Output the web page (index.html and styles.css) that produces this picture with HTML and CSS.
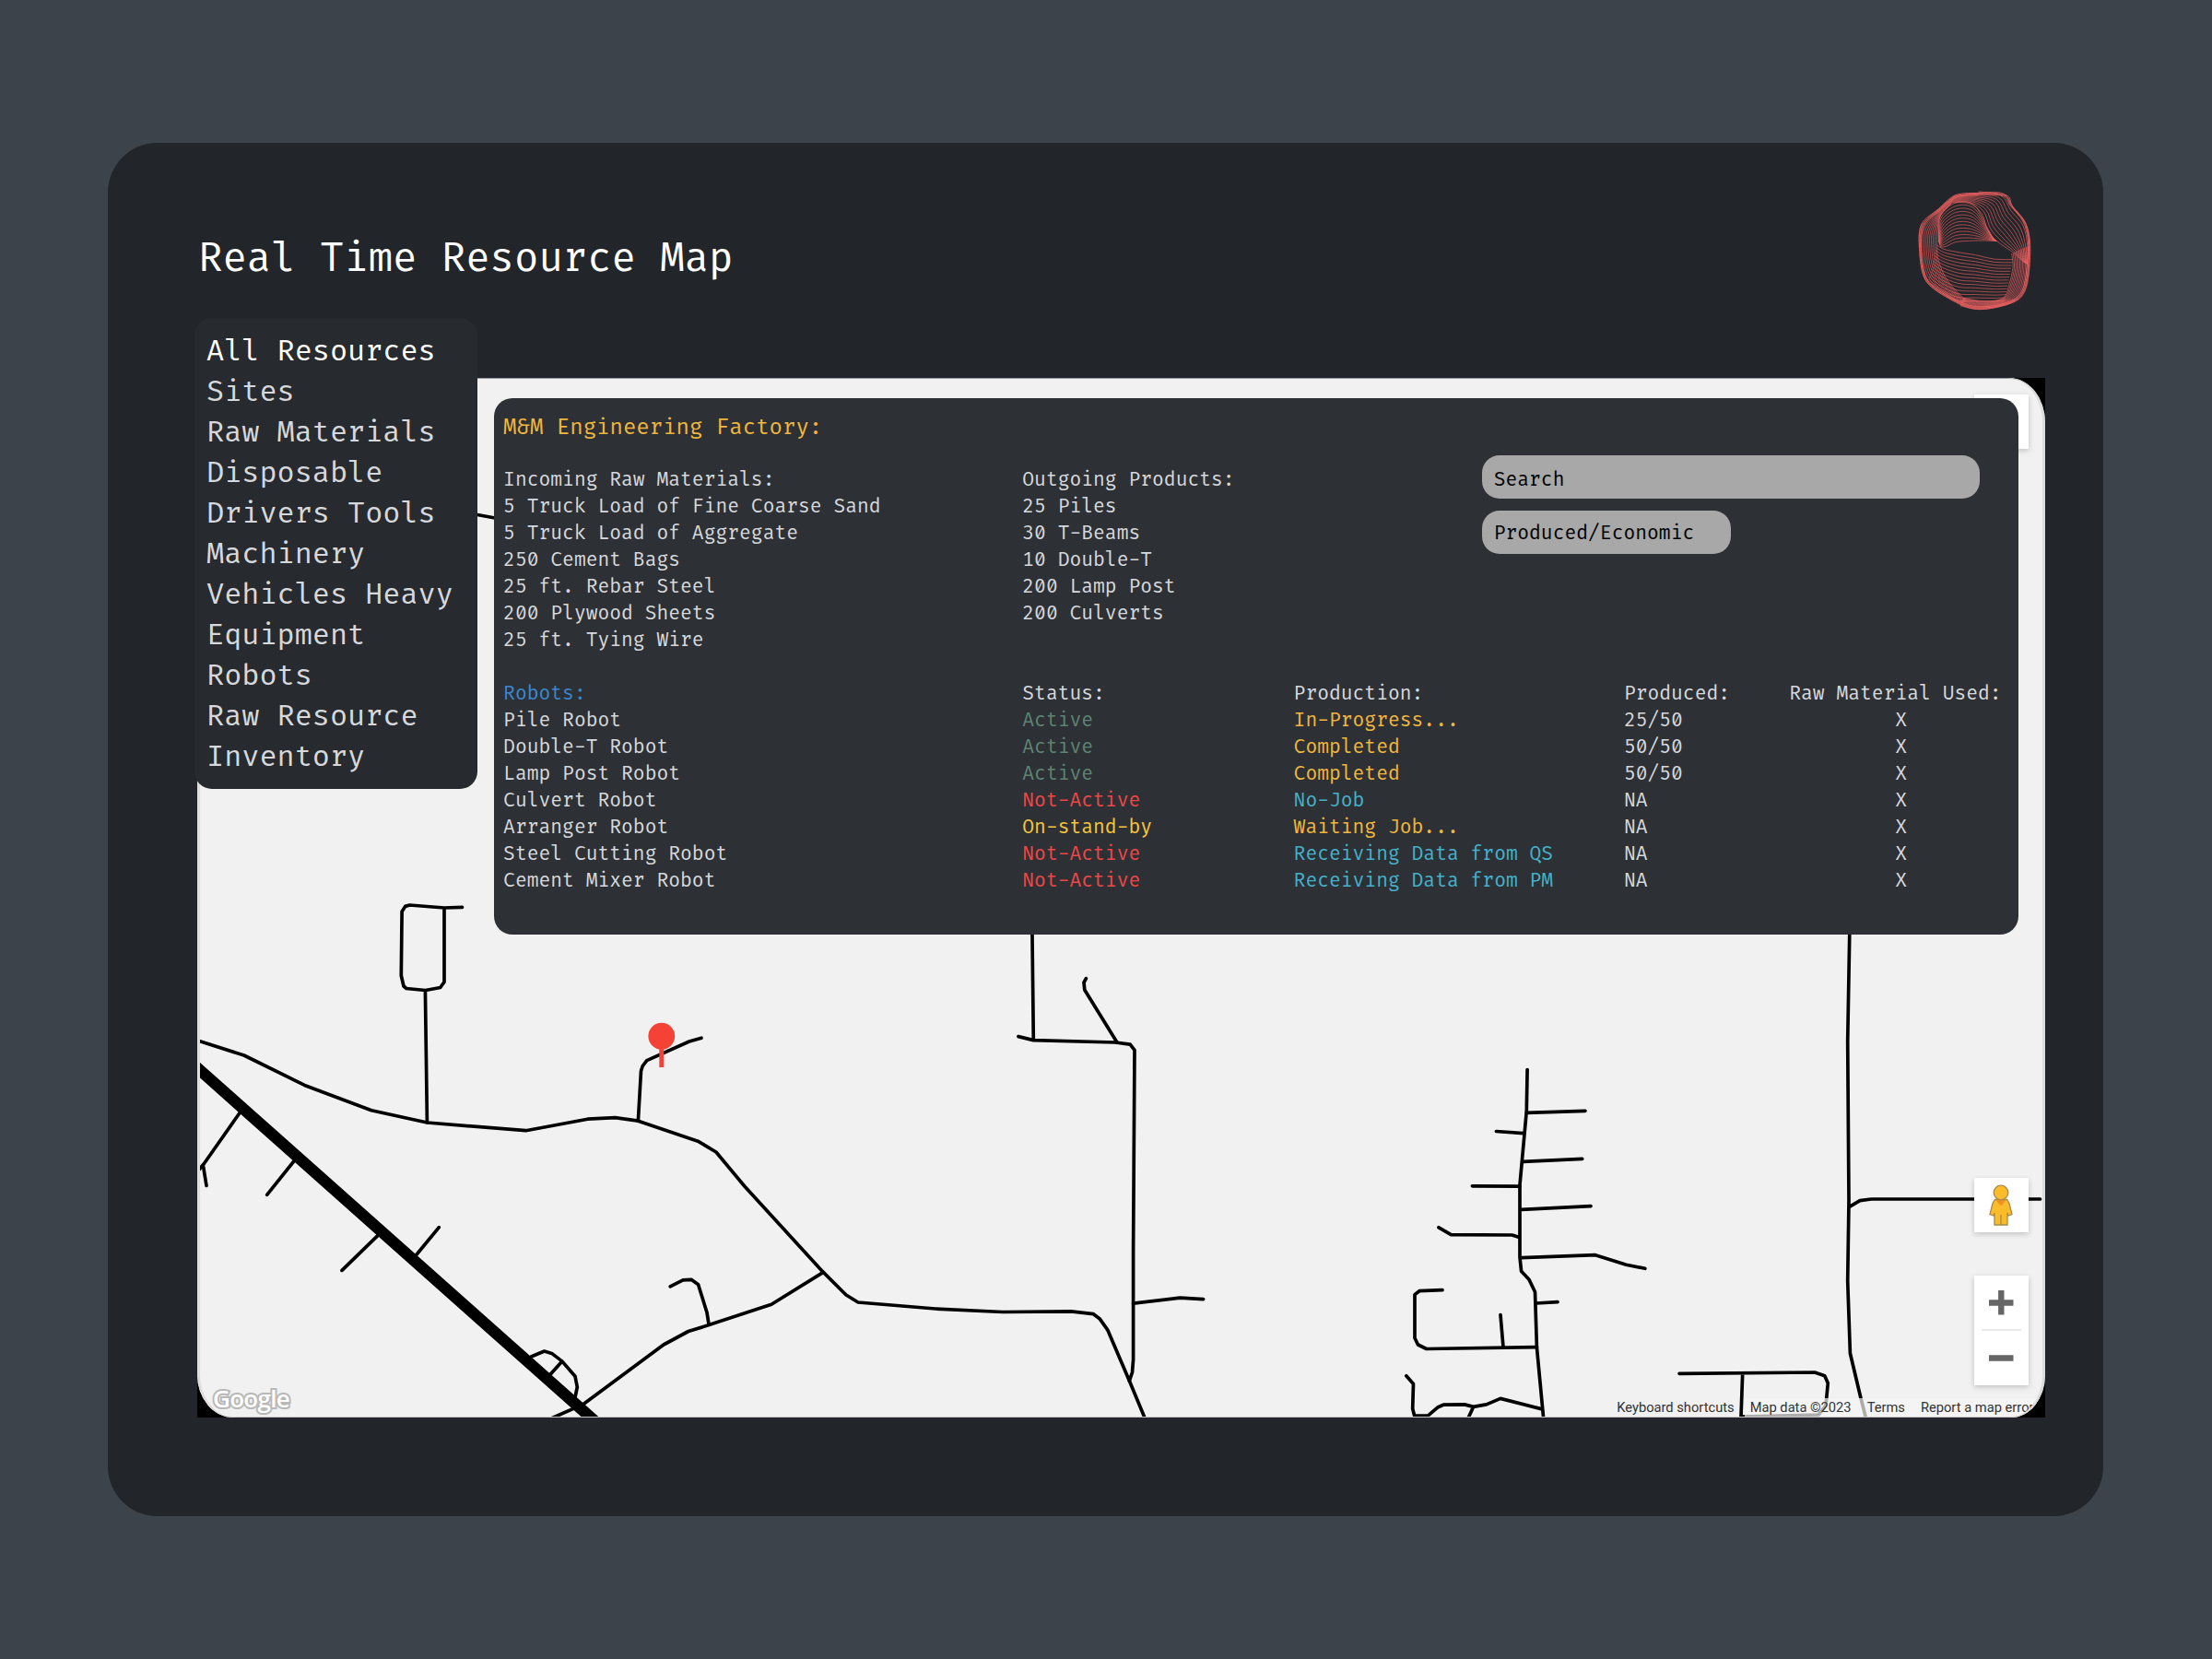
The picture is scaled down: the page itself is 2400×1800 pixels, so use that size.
FILE: index.html
```html
<!DOCTYPE html>
<html lang="en">
<head>
<meta charset="utf-8">
<title>Real Time Resource Map</title>
<link rel="stylesheet" href="styles.css">
</head>
<body>
<main class="window">
  <header class="header">
    <h1 class="title">Real Time Resource Map</h1>
    <svg class="logo" viewBox="0 0 570 540" aria-hidden="true"></svg>
  </header>

  <section class="stage">
    <div class="map-frame">
      <div class="map">
        <svg class="roads" viewBox="214 410 2005 1128" preserveAspectRatio="none">
          <path d="M500 553L518 558.500L545 563.500"/>
          <path d="M214 1129L217 1129.700L264.700 1145L330.400 1177.400L403 1204.800L463.400 1218L570.500 1226.700L637.500 1214.200L667.400 1212.700L692.400 1216.200L758 1238.600L777 1250L808 1287.300L893.300 1380.400L918 1405L931 1413L1015 1420L1088 1423.500L1162 1422.800L1186.400 1425.700L1193 1430.700L1201.700 1442.800L1225.400 1498.200L1242.300 1539"/>
          <path class="highway" d="M205 1150.500L650 1546"/>
          <path d="M261.600 1205.300L221.400 1262.500L216 1269M220.500 1265L224 1286.500M319.600 1259L289.700 1296.300M409.800 1340.600L371 1378.400M451.300 1362L476.300 1331.600"/>
          <path d="M501.500 984.400L482 985L444.600 982L439.700 983.400L436.100 989L435.300 1058.500L438 1070L441 1072.500L461.600 1074.500L477.700 1071.500L482 1065.500V985M461.400 1074.500L463.400 1218"/>
          <path d="M692.400 1216.200L695.500 1162L697.300 1156.500L701.800 1150.600L747.800 1130L761 1126.200"/>
          <path d="M893.300 1380.400L837 1415.200L769.200 1437.600L746.900 1444.500L720 1459L633 1523.600L598 1539M727.200 1395.800L741 1388.800L750 1388.300L757.600 1393.800L767 1424L769.200 1437.600"/>
          <path d="M576.300 1472L590.600 1466L598.600 1468.400L609.800 1476.900L624 1493.300L626.300 1505L624 1516M609 1478L596.400 1492"/>
          <path d="M1119.800 1000L1121.300 1128.600M1104.900 1124.600L1121.300 1128.600L1210 1131L1226.200 1133.200L1231 1139.300L1229.600 1357V1475L1228.500 1489L1225.400 1498.200"/>
          <path d="M1178.400 1061.700L1176 1066L1176.800 1074L1212 1131M1229.600 1414.200L1280.200 1408.200L1305.600 1409.600"/>
          <path d="M1657.100 1160.600L1656.300 1205.300L1649 1285.700V1364L1650.600 1379.200L1659 1388.200L1665.500 1401.800L1667.400 1461.700L1674.700 1539"/>
          <path d="M1623.400 1227.500L1653 1229.600M1597.400 1286.800L1649 1287.200M1561 1331.800L1574.400 1339.600L1640.700 1340L1648.300 1342.500"/>
          <path d="M1656.500 1207.300L1720 1205.300M1652.600 1260.300L1716.700 1257.300M1650.700 1312.300L1726 1308.700M1650.700 1364.700L1731 1361.700L1764.400 1372.300L1784.800 1376.300M1666.800 1414L1690 1412.700"/>
          <path d="M1565 1399.600L1540 1400.700L1535 1404.600V1451.800L1538.500 1459L1547.700 1463.500L1667.400 1461.700M1628 1426.700L1631 1461.700"/>
          <path d="M1525.800 1492.800L1533.500 1501.400L1532.700 1528.500L1534.700 1536.200H1549.200L1560.300 1526.700L1566 1524.200L1589 1523.900L1598.600 1526.400L1612.700 1523.900L1628 1517.400L1673.200 1528.900M1598.600 1526.400L1592.800 1539"/>
          <path d="M2007 1000L2004.700 1130L2006 1303L2004.700 1390L2007.400 1468.300L2018.900 1516.700L2024.600 1539M2006.600 1309.300L2018 1302.700L2030.400 1301H2213.500"/>
          <path d="M1822 1490.300L1969 1489L1979.800 1492.700L1983.300 1500.700L1981 1525L1973 1535L1889 1537L1890.700 1490"/>
          <rect class="pin" x="715.300" y="1130" width="5" height="28"/>
          <circle class="pin" cx="717.800" cy="1124.200" r="14.400"/>
        </svg>
        <span class="google">Google</span>
        <div class="controls">
          <div class="control fullscreen"></div>
          <div class="control pegman">
            <svg viewBox="0 0 30 48" aria-hidden="true">
              <path d="M8.500 18.500h13l2.500 4 3 12-4 1.500-1-3v13H8V33l-1 3-4-1.500 3-12z"/>
              <path class="chin" d="M9 18.500h12l-6 7z"/>
              <path d="M15 35v11"/>
              <circle cx="15" cy="11" r="7.800"/>
            </svg>
          </div>
          <div class="control zoom">
            <svg viewBox="0 0 59 119" aria-hidden="true">
              <path d="M16 29.500h26.500M29.300 16v26.500M16 89.500h26.500"/>
              <path class="divider" d="M8 59h43"/>
            </svg>
          </div>
        </div>
        <div class="attribution">
          <span class="shortcuts">Keyboard shortcuts</span>
          <div class="legal"><span>Map data ©2023</span><span>Terms</span><span>Report a map error</span></div>
        </div>
      </div>
    </div>

    <nav class="menu">
      <a class="current">All Resources</a>
      <a>Sites</a>
      <a>Raw Materials</a>
      <a>Disposable</a>
      <a>Drivers Tools</a>
      <a>Machinery</a>
      <a>Vehicles Heavy</a>
      <a>Equipment</a>
      <a>Robots</a>
      <a>Raw Resource</a>
      <a>Inventory</a>
    </nav>

    <article class="panel">
      <h2 class="factory">M&amp;M Engineering Factory:</h2>
      <div class="summary">
        <ul>
          <li>Incoming Raw Materials:</li>
          <li>5 Truck Load of Fine Coarse Sand</li>
          <li>5 Truck Load of Aggregate</li>
          <li>250 Cement Bags</li>
          <li>25 ft. Rebar Steel</li>
          <li>200 Plywood Sheets</li>
          <li>25 ft. Tying Wire</li>
        </ul>
        <ul>
          <li>Outgoing Products:</li>
          <li>25 Piles</li>
          <li>30 T-Beams</li>
          <li>10 Double-T</li>
          <li>200 Lamp Post</li>
          <li>200 Culverts</li>
        </ul>
        <div class="filters">
          <div class="field">Search</div>
          <div class="field short">Produced/Economic</div>
        </div>
      </div>
      <div class="robots">
        <span class="blue">Robots:</span><span>Status:</span><span>Production:</span><span>Produced:</span><span>Raw Material Used:</span>
        <span>Pile Robot</span><span class="green">Active</span><span class="amber">In-Progress...</span><span>25/50</span><span class="used">X</span>
        <span>Double-T Robot</span><span class="green">Active</span><span class="amber">Completed</span><span>50/50</span><span class="used">X</span>
        <span>Lamp Post Robot</span><span class="green">Active</span><span class="amber">Completed</span><span>50/50</span><span class="used">X</span>
        <span>Culvert Robot</span><span class="red">Not-Active</span><span class="cyan">No-Job</span><span>NA</span><span class="used">X</span>
        <span>Arranger Robot</span><span class="yellow">On-stand-by</span><span class="amber">Waiting Job...</span><span>NA</span><span class="used">X</span>
        <span>Steel Cutting Robot</span><span class="red">Not-Active</span><span class="cyan">Receiving Data from QS</span><span>NA</span><span class="used">X</span>
        <span>Cement Mixer Robot</span><span class="red">Not-Active</span><span class="cyan">Receiving Data from PM</span><span>NA</span><span class="used">X</span>
      </div>
    </article>
  </section>
</main>
<script src="logo.js"></script>
</body>
</html>
```

FILE: styles.css
```css
* {
  box-sizing: border-box;
}

body {
  margin: 0;
  width: 2400px;
  height: 1800px;
  padding: 155px 118px 155px 117px;
  background: #3d434b;
  color: #d6d8db;
  font-family: "Fira Code", "Fira Mono", "Liberation Mono", monospace;
  font-variant-ligatures: none;
  overflow: hidden;
}

.window {
  height: 1490px;
  padding: 0 63px 107px 97px;
  border-radius: 54px;
  background: #222529;
  display: flex;
  flex-direction: column;
}

.header {
  height: 255px;
  display: flex;
  justify-content: space-between;
  align-items: flex-start;
}

.title {
  margin: 99px 0 0 1px;
  font-size: 42.880px;
  line-height: 54px;
  font-weight: 400;
  color: #fff;
}

.logo {
  width: 190px;
  height: 180px;
  margin: 25px -21px 0 0;
  fill: none;
  stroke: #f26262;
}

.stage {
  position: relative;
  flex: 1;
}

.map-frame {
  height: 100%;
  background: #000;
}

.map {
  position: relative;
  height: 100%;
  overflow: hidden;
  border-radius: 0 39px 37px 39px / 0 48px 46px 46px;
  background: #f1f1f1;
}

.map::after {
  content: "";
  position: absolute;
  inset: 0;
  border-radius: inherit;
  box-shadow: inset 3px 0 #dedede, inset -3px 0 #dcdcdc, inset 0 1px #96969a, inset 0 -1px #c4c4c4;
}

.roads {
  display: block;
  width: 100%;
  height: 100%;
  fill: none;
  stroke: #000;
  stroke-width: 3.700;
  stroke-linecap: round;
  stroke-linejoin: round;
}

.roads .highway {
  stroke-width: 12.500;
}

.roads .pin {
  fill: #f44336;
  stroke: none;
}

.google {
  position: absolute;
  left: 17px;
  bottom: 3px;
  font: 600 26px/36px "Open Sans", sans-serif;
  letter-spacing: -0.700px;
  color: #fff;
  -webkit-text-stroke: 4px #b8b8b8;
  paint-order: stroke fill;
}

.controls {
  position: absolute;
  top: 18px;
  right: 18px;
  display: flex;
  flex-direction: column;
}

.control {
  width: 59px;
  height: 59px;
  background: #fff;
  box-shadow: 0 2px 6px rgba(0, 0, 0, 0.200);
}

.pegman {
  margin-top: 791px;
  display: flex;
  justify-content: center;
  padding: 5px 2px 0 0;
}

.pegman svg {
  width: 30px;
  height: 48px;
  fill: #fbbc2c;
  stroke: #a88a4c;
  stroke-width: 1.300;
}

.pegman .chin {
  fill: #ee9223;
  stroke: none;
}

.zoom {
  height: 119px;
  margin-top: 47px;
}

.zoom svg {
  display: block;
  stroke: #666;
  stroke-width: 6.400;
}

.zoom .divider {
  stroke: #e3e3e3;
  stroke-width: 1.500;
}

.attribution {
  position: absolute;
  right: 0;
  bottom: 0;
  display: flex;
  font: 14.700px/21px Roboto, sans-serif;
  color: #333;
  white-space: nowrap;
}

.shortcuts {
  padding-right: 11px;
}

.legal {
  display: flex;
  gap: 17px;
  padding: 0 12.500px 0 6px;
  background: rgba(245, 245, 245, 0.700);
}

.menu {
  position: absolute;
  left: -3px;
  top: -65px;
  width: 307px;
  height: 511px;
  padding: 15px 0 0 13px;
  border-radius: 19px;
  background: #272a2e;
  display: flex;
  flex-direction: column;
  font-size: 31.100px;
  line-height: 44.050px;
}

.menu .current {
  color: #fff;
}

.panel {
  position: absolute;
  left: 321.500px;
  top: 22px;
  width: 1654.500px;
  height: 582px;
  padding: 17px 0 0 10.600px;
  border-radius: 20px;
  background: #2d3035;
  font-size: 20.800px;
  line-height: 29.030px;
  white-space: nowrap;
}

.factory {
  margin: 0 0 28px;
  font-size: 23.440px;
  line-height: 29px;
  font-weight: 400;
  color: #f0b63d;
}

.summary {
  display: grid;
  grid-template-columns: 563.200px 498.400px 540px;
  height: 232.200px;
}

.summary ul {
  margin: 0;
  padding: 0;
  list-style: none;
}

.filters {
  display: flex;
  flex-direction: column;
  gap: 13px;
  margin-top: -12px;
}

.field {
  height: 47px;
  padding-left: 13px;
  border-radius: 19px;
  background: #a8a8a8;
  color: #000;
  line-height: 53px;
}

.field.short {
  width: 270px;
  line-height: 50px;
}

.robots {
  display: grid;
  grid-template-columns: 563.200px 294.300px 358.300px 179.400px auto;
}

.used {
  padding-left: 115px;
}

.blue { color: #3b87cf; }
.green { color: #5d8373; }
.amber { color: #f0b63d; }
.yellow { color: #f7c53a; }
.red { color: #ee4747; }
.cyan { color: #45b0c9; }
```

FILE: logo.js
```js
// Each band is a family of smooth strands blended from one edge curve to another.
const bands = [
  { n: 13, a: [[160,245],[165,165],[215,120],[275,127],[315,195],[340,240]], b: [[165,264],[185,262],[215,248],[260,244],[310,243],[350,245]] },
  { n: 15, a: [[155,258],[180,272],[230,282],[280,290],[340,303],[402,305]], b: [[125,378],[165,410],[220,438],[280,440],[340,440],[375,438]] },
  { n: 11, a: [[215,95],[160,140],[103,200],[98,280],[112,360],[150,405],[230,450]], b: [[200,125],[165,165],[155,220],[155,262],[160,310],[190,375],[250,440]] },
  { n: 11, a: [[215,97],[290,88],[370,90],[405,140],[445,190],[455,260],[448,320]], b: [[200,120],[260,122],[300,155],[320,210],[350,245],[400,280],[440,315]] },
  { n: 13, a: [[455,260],[455,340],[440,410],[400,445],[300,467],[230,455]], b: [[398,285],[402,330],[390,385],[370,430],[310,440],[240,430]] },
  { n: 3, w: 2.4, a: [[290,88],[215,95],[160,140],[103,192],[99,280],[112,360],[150,403],[240,455],[310,466],[400,445],[440,405],[456,320],[457,240],[440,180],[400,130],[380,95],[290,84]], b: [[290,95],[220,102],[165,145],[112,196],[104,280],[119,362],[152,395],[240,447],[310,458],[395,440],[434,400],[448,320],[451,240],[434,180],[394,130],[370,98],[290,92]] }
];

function smooth(p) {
  let d = `M${p[0][0]} ${p[0][1]}`;
  for (let i = 0; i < p.length - 1; i++) {
    const p0 = p[i - 1] || p[i], p1 = p[i], p2 = p[i + 1], p3 = p[i + 2] || p2;
    const c = [0, 1].map(k => p1[k] + (p2[k] - p0[k]) / 6);
    const e = [0, 1].map(k => p2[k] - (p3[k] - p1[k]) / 6);
    d += `C${c[0]} ${c[1]} ${e[0]} ${e[1]} ${p2[0]} ${p2[1]}`;
  }
  return d;
}

const logo = document.querySelector(".logo");
for (const band of bands) {
  for (let i = 0; i < band.n; i++) {
    const t = i / (band.n - 1);
    const points = band.a.map((q, j) => [0, 1].map(k => q[k] + (band.b[j][k] - q[k]) * t));
    const path = document.createElementNS("http://www.w3.org/2000/svg", "path");
    path.setAttribute("d", smooth(points));
    path.setAttribute("stroke-width", band.w || 1.9);
    logo.append(path);
  }
}
```
